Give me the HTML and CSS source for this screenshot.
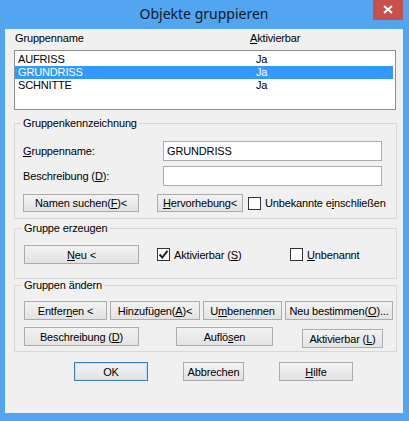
FILE: index.html
```html
<!DOCTYPE html>
<html lang="de">
<head>
    <meta charset="UTF-8">
    <title>Objekte gruppieren</title>
    <link rel="stylesheet" href="styles.css">
</head>
<body>
    <div class="window">
        <div class="titlebar">
            <span class="title">Objekte gruppieren</span>
            <span class="close">
                <svg width="30" height="20" viewBox="0 0 30 20"><path d="M11 6 L19 13 M19 6 L11 13" stroke="#fff" stroke-width="2" fill="none"/></svg>
            </span>
        </div>

        <div class="client">
            <div class="list-head">
                <span>Gruppenname</span>
                <span><u>A</u>ktivierbar</span>
            </div>
            <div class="listbox">
                <div class="row"><span>AUFRISS</span><span>Ja</span></div>
                <div class="row selected"><span>GRUNDRISS</span><span>Ja</span></div>
                <div class="row"><span>SCHNITTE</span><span>Ja</span></div>
            </div>

            <fieldset class="group g-kenn">
                <legend>Gruppenkennzeichnung</legend>
                <div class="field">
                    <label><u>G</u>ruppenname:</label>
                    <div class="input">GRUNDRISS</div>
                </div>
                <div class="field field-2">
                    <label>Beschreibung (<u>D</u>):</label>
                    <div class="input"></div>
                </div>
                <div class="btn-row row-kenn">
                    <span class="btn w-namen">Namen suchen(<u>F</u>)&lt;</span>
                    <span class="btn w-herv"><u>H</u>ervorhebung&lt;</span>
                    <span class="checklabel cl-unbek"><span class="check"></span><span>Unbekannte e<u>i</u>nschließen</span></span>
                </div>
            </fieldset>

            <fieldset class="group g-neu">
                <legend>Gruppe erzeugen</legend>
                <div class="btn-row">
                    <span class="btn w-neu"><u>N</u>eu &lt;</span>
                    <span class="checklabel cl-akt">
                        <span class="check">
                            <svg width="11" height="11" viewBox="0 0 11 11"><path d="M1.5 5.5 L4.3 8.5 L9.5 1.8" stroke="#222" stroke-width="2" fill="none"/></svg>
                        </span>
                        <span>Aktivierbar (<u>S</u>)</span>
                    </span>
                    <span class="checklabel"><span class="check"></span><span><u>U</u>nbenannt</span></span>
                </div>
            </fieldset>

            <fieldset class="group g-edit">
                <legend>Gruppen ändern</legend>
                <div class="btn-row gap-3">
                    <span class="btn w-entf">Entfer<u>n</u>en &lt;</span>
                    <span class="btn w-hinzu">Hinzufügen(<u>A</u>)&lt;</span>
                    <span class="btn w-umb">U<u>m</u>benennen</span>
                    <span class="btn w-neubest">Neu bestimmen(<u>O</u>)...</span>
                </div>
                <div class="btn-row row-edit2">
                    <span class="btn w-beschr">Beschreibung (<u>D</u>)</span>
                    <span class="btn w-aufl">Auflö<u>s</u>en</span>
                    <span class="btn w-aktl">Aktivierbar (<u>L</u>)</span>
                </div>
            </fieldset>

            <div class="btn-row dialog-buttons">
                <span class="btn default w-ok">OK</span>
                <span class="btn w-abbr">Abbrechen</span>
                <span class="btn w-hilfe"><u>H</u>ilfe</span>
            </div>
        </div>
    </div>
</body>
</html>
```

FILE: styles.css
```css
*{
    margin: 0;
    padding: 0;
    box-sizing: border-box;
}
body{
    font-family: "Liberation Sans", Arial, sans-serif;
    font-size: 11px;
    letter-spacing: -0.15px;
    color: #000;
    background-color: #52a5f0;
}
u{
    text-underline-offset: 1px;
}
.window{
    width: 409px;
    height: 421px;
    background-color: #52a5f0;
    padding-left: 5px;
}

/* title bar */
.titlebar{
    height: 29px;
    margin-left: -5px;
    padding: 0 6px 0 5px;
    display: grid;
    grid-template-columns: 30px 1fr 30px;
}
.title{
    grid-column: 2;
    align-self: center;
    text-align: center;
    font-family: "Noto Sans", sans-serif;
    font-size: 14px;
    letter-spacing: 0;
    color: #0f1a28;
    line-height: 20px;
    margin-top: -1px;
}
.close{
    grid-column: 3;
    height: 20px;
    background-color: #c7504b;
    display: block;
}
.close svg{
    display: block;
}

/* client area */
.client{
    width: 398px;
    height: 384px;
    background-color: #f0f0f0;
    padding: 3px 0 0 9px;
}
.list-head{
    display: grid;
    grid-template-columns: 235px auto;
    padding-left: 1px;
    line-height: 13px;
}
.listbox{
    width: 382px;
    height: 60px;
    margin-top: 5px;
    border: 1px solid #8f8f8f;
    background-color: #fff;
    padding-top: 2px;
}
.row{
    display: grid;
    grid-template-columns: 238px auto;
    padding-left: 3px;
    line-height: 13px;
    height: 13px;
    margin-right: 2px;
}
.row.selected{
    background-color: #3399ff;
    color: #fff;
}

/* group boxes */
.group{
    width: 383px;
    border: 1px solid #d8d8d8;
    min-width: 0;
}
.group legend{
    line-height: 13px;
    padding: 0 2px;
    margin-left: -2px;
}
.g-kenn{
    margin-top: 7px;
    padding: 11px 0 6px 8px;
}
.g-neu{
    margin-top: 3px;
    padding: 10px 0 14px 9px;
}
.g-edit{
    padding: 9px 0 3px 9px;
}

.field{
    display: flex;
    align-items: center;
    height: 20px;
}
.field label{
    width: 140px;
}
.field-2{
    margin-top: 5px;
}
.input{
    width: 219px;
    height: 20px;
    border: 1px solid #abadb3;
    background-color: #fff;
    padding-left: 3px;
    line-height: 18px;
}

/* buttons */
.btn-row{
    display: flex;
    align-items: center;
}
.btn{
    display: inline-flex;
    justify-content: center;
    align-items: center;
    height: 19px;
    border: 1px solid #acacac;
    background: linear-gradient(#f2f2f2, #e3e3e3);
    white-space: nowrap;
}
.btn.default{
    border-color: #3c7fb1;
    box-shadow: inset 0 0 0 1px #bfe0f7;
}
.row-kenn{
    margin-top: 8px;
}
.row-kenn .btn{
    height: 18px;
}
.w-namen{ width: 116px; }
.w-herv{ width: 86px; margin-left: 18px; }
.cl-unbek{ margin-left: 5px; }

.checklabel{
    display: inline-flex;
    align-items: center;
}
.check{
    width: 13px;
    height: 13px;
    border: 1px solid #333;
    background-color: #fff;
    margin-right: 4px;
    display: inline-block;
}
.check svg{
    display: block;
}
.w-neu{ width: 115px; }
.cl-akt{
    width: 133px;
    margin-left: 18px;
}

.gap-3{
    gap: 3px;
}
.w-entf{ width: 83px; }
.w-hinzu{ width: 90px; }
.w-umb{ width: 79px; }
.w-neubest{ width: 108px; }
.row-edit2{
    margin-top: 7px;
    align-items: flex-start;
    height: 21px;
}
.w-beschr{ width: 115px; }
.w-aufl{ width: 97px; margin-left: 37px; }
.w-aktl{ width: 81px; margin-left: 29px; margin-top: 2px; }

.dialog-buttons{
    margin-top: 10px;
}
.w-ok{ width: 74px; margin-left: 60px; }
.w-abbr{ width: 61px; margin-left: 35px; }
.w-hilfe{ width: 74px; margin-left: 35px; }
```
